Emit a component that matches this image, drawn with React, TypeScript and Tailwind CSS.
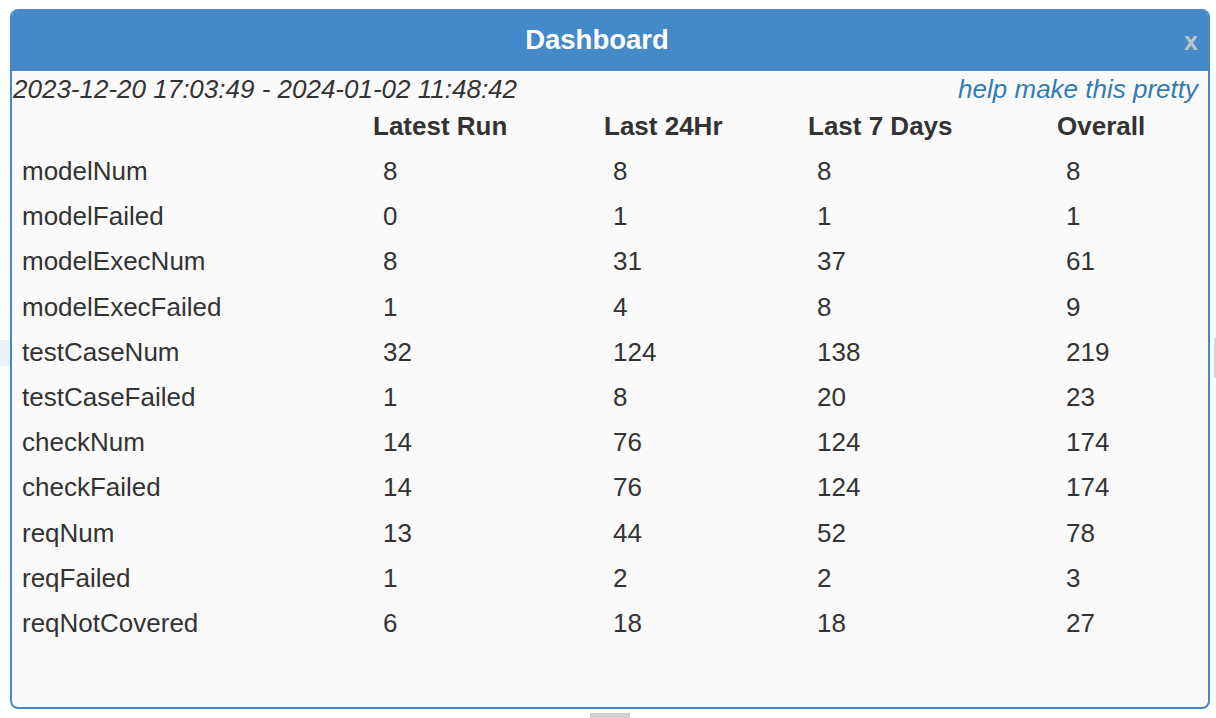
/* Dashboard dialog — stats table in a blue-framed modal */

const rows: [string, number, number, number, number][] = [
  ["modelNum", 8, 8, 8, 8],
  ["modelFailed", 0, 1, 1, 1],
  ["modelExecNum", 8, 31, 37, 61],
  ["modelExecFailed", 1, 4, 8, 9],
  ["testCaseNum", 32, 124, 138, 219],
  ["testCaseFailed", 1, 8, 20, 23],
  ["checkNum", 14, 76, 124, 174],
  ["checkFailed", 14, 76, 124, 174],
  ["reqNum", 13, 44, 52, 78],
  ["reqFailed", 1, 2, 2, 3],
  ["reqNotCovered", 6, 18, 18, 27],
];

const cols = "grid grid-cols-[361px_231px_204px_249px_1fr]";

export default function App() {
  return (
    <div
      className="relative w-[1216px] h-[718px] bg-white overflow-hidden text-[#333]"
      style={{ fontFamily: '"Liberation Sans", Arial, sans-serif' }}
    >
      {/* stuff peeking out behind the dialog */}
      <div className="absolute left-0 top-[340px] w-[10px] h-[26px] bg-[#e9f1fb]" />
      <div className="absolute right-0 top-[338px] w-[2px] h-[40px] bg-[#d4d4d4]" />
      <div className="absolute left-[590px] top-[713px] w-[40px] h-[5px] bg-[#cfcfcf]" />

      <div className="ml-[10px] mt-[9px] w-[1200px] h-[700px] flex flex-col rounded-lg border-2 border-t-0 border-[#448ac8] bg-[#fafafa] overflow-hidden">
        {/* Header */}
        <div className="relative h-[62px] shrink-0 bg-[#448ac8] flex items-center justify-center pr-[26px]">
          <h1 className="text-white font-bold text-[27.5px]">Dashboard</h1>
          <span className="absolute right-[10px] top-[20px] text-[#c0c2c6] font-bold text-[25px] leading-none">
            x
          </span>
        </div>

        {/* Range + link */}
        <div className="h-[33px] flex items-center justify-between pl-[1px] pr-[10px] pt-[4px] italic text-[26px]">
          <span>2023-12-20 17:03:49 - 2024-01-02 11:48:42</span>
          <a href="#" className="text-[#337ab7]">
            help make this pretty
          </a>
        </div>

        {/* Table */}
        <div className="text-[26px]">
          <div className={`${cols} h-[45px] items-center font-bold`}>
            <div />
            <div>Latest Run</div>
            <div>Last 24Hr</div>
            <div>Last 7 Days</div>
            <div>Overall</div>
          </div>
          {rows.map(([name, a, b, c, d]) => (
            <div key={name} className={`${cols} h-[45.2px] items-center`}>
              <div className="pl-[10px]">{name}</div>
              <div className="pl-[10px]">{a}</div>
              <div className="pl-[9px]">{b}</div>
              <div className="pl-[9px]">{c}</div>
              <div className="pl-[9px]">{d}</div>
            </div>
          ))}
        </div>
      </div>
    </div>
  );
}
